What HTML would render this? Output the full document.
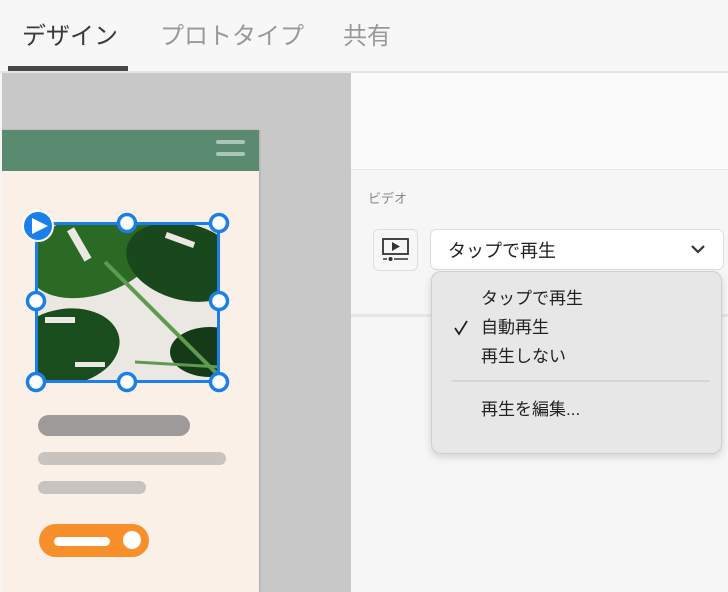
<!DOCTYPE html>
<html><head><meta charset="utf-8"><style>
*{margin:0;padding:0;box-sizing:border-box}
body{width:728px;height:592px;overflow:hidden;background:#f6f6f6;font-family:"Liberation Sans","Noto Sans CJK JP",sans-serif;position:relative}
.a{position:absolute}
</style></head><body>
<div class="a" style="left:0;top:0;width:728px;height:70px;background:#f7f7f7"></div>
<div class="a" style="left:22px;top:16px;font-size:24px;color:#3a3a3a">デザイン</div>
<div class="a" style="left:160px;top:16px;font-size:24px;color:#999">プロトタイプ</div>
<div class="a" style="left:343px;top:16px;font-size:24px;color:#999">共有</div>
<div class="a" style="left:8px;top:66px;width:120px;height:5px;background:#49464a"></div>
<div class="a" style="left:0;top:71px;width:728px;height:2px;background:#e4e4e4"></div>
<div class="a" style="left:2px;top:73px;width:349px;height:519px;background:#c8c8c8"></div>
<div class="a" style="left:351px;top:73px;width:377px;height:97px;background:#fbfbfb"></div>
<div class="a" style="left:351px;top:169px;width:377px;height:1px;background:#e6e6e6"></div>
<div class="a" style="left:351px;top:314px;width:377px;height:3px;background:#e6e6e6"></div>
<!-- mockup -->
<div class="a" style="left:2px;top:130px;width:257px;height:462px;background:#faf0e8;box-shadow:1px 0 2px rgba(0,0,0,.15)"></div>
<div class="a" style="left:2px;top:130px;width:257px;height:41px;background:#5a8a70"></div>
<div class="a" style="left:216px;top:140px;width:29px;height:4px;border-radius:2px;background:#a9c7b6"></div>
<div class="a" style="left:216px;top:152px;width:29px;height:4px;border-radius:2px;background:#a9c7b6"></div>
<svg class="a" style="left:35px;top:222px" width="185" height="161" viewBox="0 0 185 161">
<rect width="185" height="161" fill="#ebe8e4"/>
<g fill="#1f5a22">
<ellipse cx="60" cy="30" rx="70" ry="42" transform="rotate(-20 60 30)" fill="#2a6a25"/>
<ellipse cx="150" cy="40" rx="60" ry="38" transform="rotate(15 150 40)" fill="#18481b"/>
<ellipse cx="30" cy="125" rx="55" ry="38" transform="rotate(-10 30 125)" fill="#1a4d1e"/>
<ellipse cx="175" cy="130" rx="40" ry="25" fill="#143a17"/>
</g>
<g fill="#ebe8e4"><rect x="40" y="5" width="8" height="35" transform="rotate(-30 44 22)"/><rect x="130" y="15" width="30" height="6" transform="rotate(20 145 18)"/><rect x="10" y="95" width="30" height="6"/><rect x="40" y="140" width="30" height="5"/></g>
<path d="M70 40 L185 155" stroke="#5f9a4f" stroke-width="4" fill="none"/>
<path d="M100 140 L185 145" stroke="#5f9a4f" stroke-width="3" fill="none"/>
</svg>
<div class="a" style="left:35px;top:222px;width:185px;height:161px;border:3px solid #1a7fe8"></div>
<svg class="a" style="left:0;top:200px" width="260" height="200">
<g fill="#fff" stroke="#1a7fe8" stroke-width="3.5">
<circle cx="127" cy="23" r="8.5"/><circle cx="219" cy="23" r="8.5"/><circle cx="36" cy="101" r="8.5"/><circle cx="219" cy="101" r="8.5"/><circle cx="36" cy="182" r="8.5"/><circle cx="127" cy="182" r="8.5"/><circle cx="219" cy="182" r="8.5"/>
</g>
<circle cx="38" cy="26" r="15" fill="#1a7fe8" stroke="#fff" stroke-width="2"/>
<path d="M32 18 L48 26 L32 34Z" fill="#fff"/>
</svg>
<div class="a" style="left:38px;top:415px;width:152px;height:21px;border-radius:11px;background:#9e9a9a"></div>
<div class="a" style="left:38px;top:452px;width:188px;height:13px;border-radius:7px;background:#c9c3c0"></div>
<div class="a" style="left:38px;top:481px;width:108px;height:13px;border-radius:7px;background:#c9c3c0"></div>
<div class="a" style="left:39px;top:524px;width:110px;height:33px;border-radius:17px;background:#f7902a"></div>
<div class="a" style="left:54px;top:537px;width:56px;height:9px;border-radius:5px;background:#fff"></div>
<div class="a" style="left:123px;top:531px;width:18px;height:18px;border-radius:50%;background:#fff"></div>
<!-- panel -->
<div class="a" style="left:368px;top:188px;font-size:13px;color:#888">ビデオ</div>
<div class="a" style="left:373px;top:229px;width:45px;height:42px;border:1px solid #ddd;border-radius:6px;background:#f7f7f7"></div>
<svg class="a" style="left:380px;top:236px" width="32" height="30"><rect x="3" y="3" width="25" height="15" fill="none" stroke="#333" stroke-width="1.8"/><path d="M12 6 L20 10.5 L12 15Z" fill="#333"/><path d="M3 23h4M14 23h14" stroke="#333" stroke-width="1.5"/><circle cx="10.5" cy="23" r="2" fill="#333"/></svg>
<div class="a" style="left:430px;top:229px;width:294px;height:41px;border:1px solid #ddd;border-radius:6px;background:#fff"></div>
<div class="a" style="left:448px;top:237px;font-size:18px;color:#222">タップで再生</div>
<svg class="a" style="left:688px;top:241px" width="20" height="16"><path d="M4 5 L10 11 L16 5" stroke="#333" stroke-width="2.2" fill="none"/></svg>
<div class="a" style="left:431px;top:271px;width:291px;height:183px;border:1px solid #cfcfcf;border-radius:10px;background:#e8e7e7;box-shadow:0 3px 8px rgba(0,0,0,.15)"></div>
<div class="a" style="left:481px;top:284px;font-size:17px;color:#222;line-height:29px">タップで再生<br>自動再生<br>再生しない</div>
<svg class="a" style="left:452px;top:319px" width="18" height="18"><path d="M3 9 L7 15 L15 2" stroke="#222" stroke-width="1.8" fill="none"/></svg>
<div class="a" style="left:452px;top:380px;width:258px;height:2px;background:#d6d6d6"></div>
<div class="a" style="left:481px;top:395px;font-size:17px;color:#222">再生を編集...</div>
</body></html>
